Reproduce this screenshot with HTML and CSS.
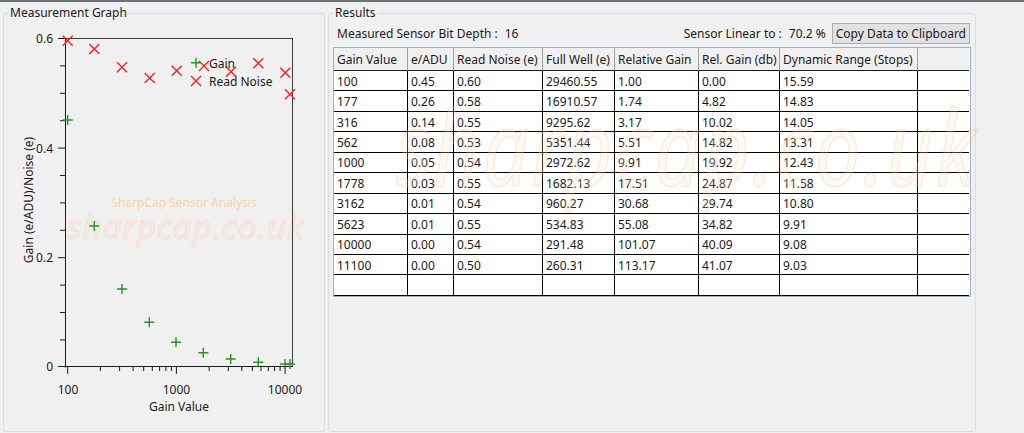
FILE: index.html
```html
<!DOCTYPE html>
<html lang="en">
<head>
    <meta charset="UTF-8">
    <meta name="viewport" content="width=device-width, initial-scale=1.0">
    <title>Sensor Analysis</title>
    <link rel="stylesheet" href="styles.css">
</head>
<body>
    <div class="topline"></div>

    <div class="panes">
        <fieldset class="group graph">
            <legend>Measurement Graph</legend>
            <svg class="chart" width="319" height="406" viewBox="4 21 319 406">
                <!-- watermark -->
                <text class="wm-title" x="184" y="202">SharpCap Sensor Analysis</text>
                <text class="wm-site" x="186" y="239">sharpcap.co.uk</text>

                <!-- frame -->
                <rect class="frame" x="65.5" y="38.5" width="227" height="328"/>
                <line class="axis" x1="65.5" y1="38" x2="65.5" y2="367.5"/>
                <line class="axis" x1="65" y1="366.5" x2="293" y2="366.5"/>

                <!-- y ticks -->
                <g class="ticks">
                    <line x1="58" y1="38.5" x2="65" y2="38.5"/>
                    <line x1="60" y1="65.9" x2="65" y2="65.9"/>
                    <line x1="60" y1="93.3" x2="65" y2="93.3"/>
                    <line x1="60" y1="120.7" x2="65" y2="120.7"/>
                    <line x1="58" y1="148.1" x2="65" y2="148.1"/>
                    <line x1="60" y1="175.5" x2="65" y2="175.5"/>
                    <line x1="60" y1="202.9" x2="65" y2="202.9"/>
                    <line x1="60" y1="230.3" x2="65" y2="230.3"/>
                    <line x1="58" y1="257.7" x2="65" y2="257.7"/>
                    <line x1="60" y1="285.1" x2="65" y2="285.1"/>
                    <line x1="60" y1="312.5" x2="65" y2="312.5"/>
                    <line x1="60" y1="339.9" x2="65" y2="339.9"/>
                    <line x1="58" y1="366.5" x2="65" y2="366.5"/>
                </g>

                <!-- x ticks (log) -->
                <g class="ticks">
                    <line x1="67.7" y1="367" x2="67.7" y2="374"/>
                    <line x1="100.4" y1="367" x2="100.4" y2="371"/>
                    <line x1="119.6" y1="367" x2="119.6" y2="371"/>
                    <line x1="133.1" y1="367" x2="133.1" y2="371"/>
                    <line x1="143.7" y1="367" x2="143.7" y2="371"/>
                    <line x1="152.3" y1="367" x2="152.3" y2="371"/>
                    <line x1="159.6" y1="367" x2="159.6" y2="371"/>
                    <line x1="165.9" y1="367" x2="165.9" y2="371"/>
                    <line x1="171.4" y1="367" x2="171.4" y2="371"/>
                    <line x1="176.4" y1="367" x2="176.4" y2="374"/>
                    <line x1="209.1" y1="367" x2="209.1" y2="371"/>
                    <line x1="228.3" y1="367" x2="228.3" y2="371"/>
                    <line x1="241.8" y1="367" x2="241.8" y2="371"/>
                    <line x1="252.4" y1="367" x2="252.4" y2="371"/>
                    <line x1="261" y1="367" x2="261" y2="371"/>
                    <line x1="268.3" y1="367" x2="268.3" y2="371"/>
                    <line x1="274.6" y1="367" x2="274.6" y2="371"/>
                    <line x1="280.1" y1="367" x2="280.1" y2="371"/>
                    <line x1="285.1" y1="367" x2="285.1" y2="374"/>
                </g>

                <!-- labels -->
                <g class="labels">
                    <text class="ylab" x="53" y="38">0.6</text>
                    <text class="ylab" x="53" y="148">0.4</text>
                    <text class="ylab" x="53" y="257.5">0.2</text>
                    <text class="ylab" x="53" y="366.5">0</text>
                    <text class="xlab" x="68" y="389">100</text>
                    <text class="xlab" x="176.4" y="389">1000</text>
                    <text class="xlab" x="285" y="389">10000</text>
                    <text class="xlab" x="179" y="406">Gain Value</text>
                    <text class="xlab" transform="translate(28 200) rotate(-90)">Gain (e/ADU)/Noise (e)</text>
                </g>

                <!-- read noise -->
                <g class="cross">
                    <path d="M62.7 35.7l10 10M72.7 35.7l-10 10"/>
                    <path d="M89.3 44l10 10M99.3 44l-10 10"/>
                    <path d="M117 62.3l10 10M127 62.3l-10 10"/>
                    <path d="M144.7 73l10 10M154.7 73l-10 10"/>
                    <path d="M171.7 65.7l10 10M181.7 65.7l-10 10"/>
                    <path d="M199 61l10 10M209 61l-10 10"/>
                    <path d="M226 66.7l10 10M236 66.7l-10 10"/>
                    <path d="M253.3 58.3l10 10M263.3 58.3l-10 10"/>
                    <path d="M280.3 67.7l10 10M290.3 67.7l-10 10"/>
                    <path d="M285 89.3l10 10M295 89.3l-10 10"/>
                    <path d="M191 76l10 10M201 76l-10 10"/>
                </g>

                <!-- gain -->
                <g class="plus">
                    <path d="M62.7 120h10M67.7 115v10"/>
                    <path d="M89.3 226h10M94.3 221v10"/>
                    <path d="M117 289h10M122 284v10"/>
                    <path d="M144.3 322.3h10M149.3 317.3v10"/>
                    <path d="M171 342.3h10M176 337.3v10"/>
                    <path d="M198.3 352.7h10M203.3 347.7v10"/>
                    <path d="M225.7 359h10M230.7 354v10"/>
                    <path d="M253.3 362.3h10M258.3 357.3v10"/>
                    <path d="M280 364h10M285 359v10"/>
                    <path d="M285 364h10M290 359v10"/>
                    <path d="M191 62.7h10M196 57.7v10"/>
                </g>

                <text class="legend" x="209" y="63">Gain</text>
                <text class="legend" x="209" y="81">Read Noise</text>
            </svg>
        </fieldset>

        <fieldset class="group results">
            <legend>Results</legend>
            <div class="info-row">
                <div class="info">Measured Sensor Bit Depth :<span class="value">16</span></div>
                <div class="info">
                    Sensor Linear to :<span class="value">70.2 %</span>
                    <button class="copy-btn">Copy Data to Clipboard</button>
                </div>
            </div>

            <div class="grid">
                <table>
                    <thead>
                        <tr>
                            <th class="c1">Gain Value</th>
                            <th class="c2">e/ADU</th>
                            <th class="c3">Read Noise (e)</th>
                            <th class="c4">Full Well (e)</th>
                            <th class="c5">Relative Gain</th>
                            <th class="c6">Rel. Gain (db)</th>
                            <th class="c7">Dynamic Range (Stops)</th>
                            <th class="c8"></th>
                        </tr>
                    </thead>
                    <tbody>
                        <tr><td>100</td><td>0.45</td><td>0.60</td><td>29460.55</td><td>1.00</td><td>0.00</td><td>15.59</td><td></td></tr>
                        <tr><td>177</td><td>0.26</td><td>0.58</td><td>16910.57</td><td>1.74</td><td>4.82</td><td>14.83</td><td></td></tr>
                        <tr><td>316</td><td>0.14</td><td>0.55</td><td>9295.62</td><td>3.17</td><td>10.02</td><td>14.05</td><td></td></tr>
                        <tr><td>562</td><td>0.08</td><td>0.53</td><td>5351.44</td><td>5.51</td><td>14.82</td><td>13.31</td><td></td></tr>
                        <tr><td>1000</td><td>0.05</td><td>0.54</td><td>2972.62</td><td>9.91</td><td>19.92</td><td>12.43</td><td></td></tr>
                        <tr><td>1778</td><td>0.03</td><td>0.55</td><td>1682.13</td><td>17.51</td><td>24.87</td><td>11.58</td><td></td></tr>
                        <tr><td>3162</td><td>0.01</td><td>0.54</td><td>960.27</td><td>30.68</td><td>29.74</td><td>10.80</td><td></td></tr>
                        <tr><td>5623</td><td>0.01</td><td>0.55</td><td>534.83</td><td>55.08</td><td>34.82</td><td>9.91</td><td></td></tr>
                        <tr><td>10000</td><td>0.00</td><td>0.54</td><td>291.48</td><td>101.07</td><td>40.09</td><td>9.08</td><td></td></tr>
                        <tr><td>11100</td><td>0.00</td><td>0.50</td><td>260.31</td><td>113.17</td><td>41.07</td><td>9.03</td><td></td></tr>
                        <tr><td></td><td></td><td></td><td></td><td></td><td></td><td></td><td></td></tr>
                    </tbody>
                </table>
            </div>
        </fieldset>

        <div class="watermark">sharpcap.co.uk</div>
    </div>
</body>
</html>
```

FILE: styles.css
```css
body {
    margin: 0;
    background-color: #f0f0f0;
    font-family: "Noto Sans", "Open Sans", sans-serif;
    font-size: 12px;
    color: #1a1a1a;
    overflow: hidden;
}

.topline {
    height: 2px;
    background-color: #6d7179;
}

.panes {
    position: relative;
    display: flex;
    gap: 3px;
    padding: 3px 0 0 3px;
}

.group {
    box-sizing: border-box;
    height: 427px;
    margin: 0;
    min-width: 0;
    border: 1px solid #d7dee4;
    border-radius: 3px;
}

.group legend {
    padding: 0 2px;
    line-height: 16px;
    color: #1a1a1a;
}

.graph {
    width: 322px;
    padding: 0;
}

.graph legend {
    margin-left: 4px;
}

.chart {
    display: block;
}

.chart text {
    font-family: "Noto Sans", "Open Sans", sans-serif;
    font-size: 12px;
    fill: #1a1a1a;
}

.chart .ylab {
    text-anchor: end;
    dominant-baseline: central;
}

.chart .xlab {
    text-anchor: middle;
    dominant-baseline: central;
}

.chart .legend {
    dominant-baseline: central;
}

.chart .wm-title {
    fill: #f5d7a0;
    text-anchor: middle;
    dominant-baseline: central;
}

.chart .wm-site {
    font-size: 33px;
    font-style: italic;
    letter-spacing: 1px;
    text-anchor: middle;
    fill: #f4ece7;
    stroke: #f5e0d2;
    stroke-width: 1;
}

.frame {
    fill: none;
    stroke: #3c3c3c;
    stroke-width: 1;
}

.axis {
    stroke: #1a1a1a;
    stroke-width: 1;
}

.ticks line {
    stroke: #1a1a1a;
    stroke-width: 1;
}

.cross path {
    stroke: #ff1f1f;
    stroke-width: 1.4;
    fill: none;
}

.plus path {
    stroke: #1f9a1f;
    stroke-width: 1.4;
    fill: none;
}

.results {
    width: 648px;
    padding: 0 4px;
}

.info-row {
    display: flex;
    justify-content: space-between;
    align-items: center;
    height: 21px;
    margin-top: 2px;
    padding: 0 1px 0 4px;
}

.info {
    display: flex;
    align-items: center;
}

.info .value {
    margin-left: 7px;
}

.copy-btn {
    height: 21px;
    margin-left: 6px;
    padding: 0 3px;
    font-family: inherit;
    font-size: 12px;
    color: #1a1a1a;
    background-color: #e1e1e1;
    border: 1px solid #adadad;
}

.grid {
    margin-top: 3px;
    border: 1px solid #9cb0c9;
    background-color: #ffffff;
}

.grid table {
    table-layout: fixed;
    border-collapse: separate;
    border-spacing: 0;
    width: 635px;
}

.grid th, .grid td {
    box-sizing: border-box;
    padding: 1px 0 0 3px;
    text-align: left;
    font-weight: normal;
    white-space: nowrap;
    overflow: hidden;
}

.grid th {
    height: 23px;
    background-color: #f0f0f0;
    border-right: 1px solid #a0a0a0;
    border-bottom: 1px solid #1a1a1a;
}

.grid td {
    height: 20.45px;
    border-right: 1px solid #000000;
    border-bottom: 1px solid #000000;
}

.grid th:last-child, .grid td:last-child {
    border-right: none;
}

.c1 { width: 74px; }
.c2 { width: 46px; }
.c3 { width: 89px; }
.c4 { width: 72px; }
.c5 { width: 84px; }
.c6 { width: 81px; }
.c7 { width: 138px; }
.c8 { width: 51px; }

.watermark {
    position: absolute;
    left: 396px;
    top: 92px;
    font-size: 80px;
    line-height: 1;
    font-style: italic;
    letter-spacing: 3px;
    color: rgba(250, 228, 210, 0.22);
    -webkit-text-stroke: 1.5px rgba(240, 175, 120, 0.2);
    transform: scaleY(1.3);
    transform-origin: left top;
    pointer-events: none;
    white-space: nowrap;
}
```
